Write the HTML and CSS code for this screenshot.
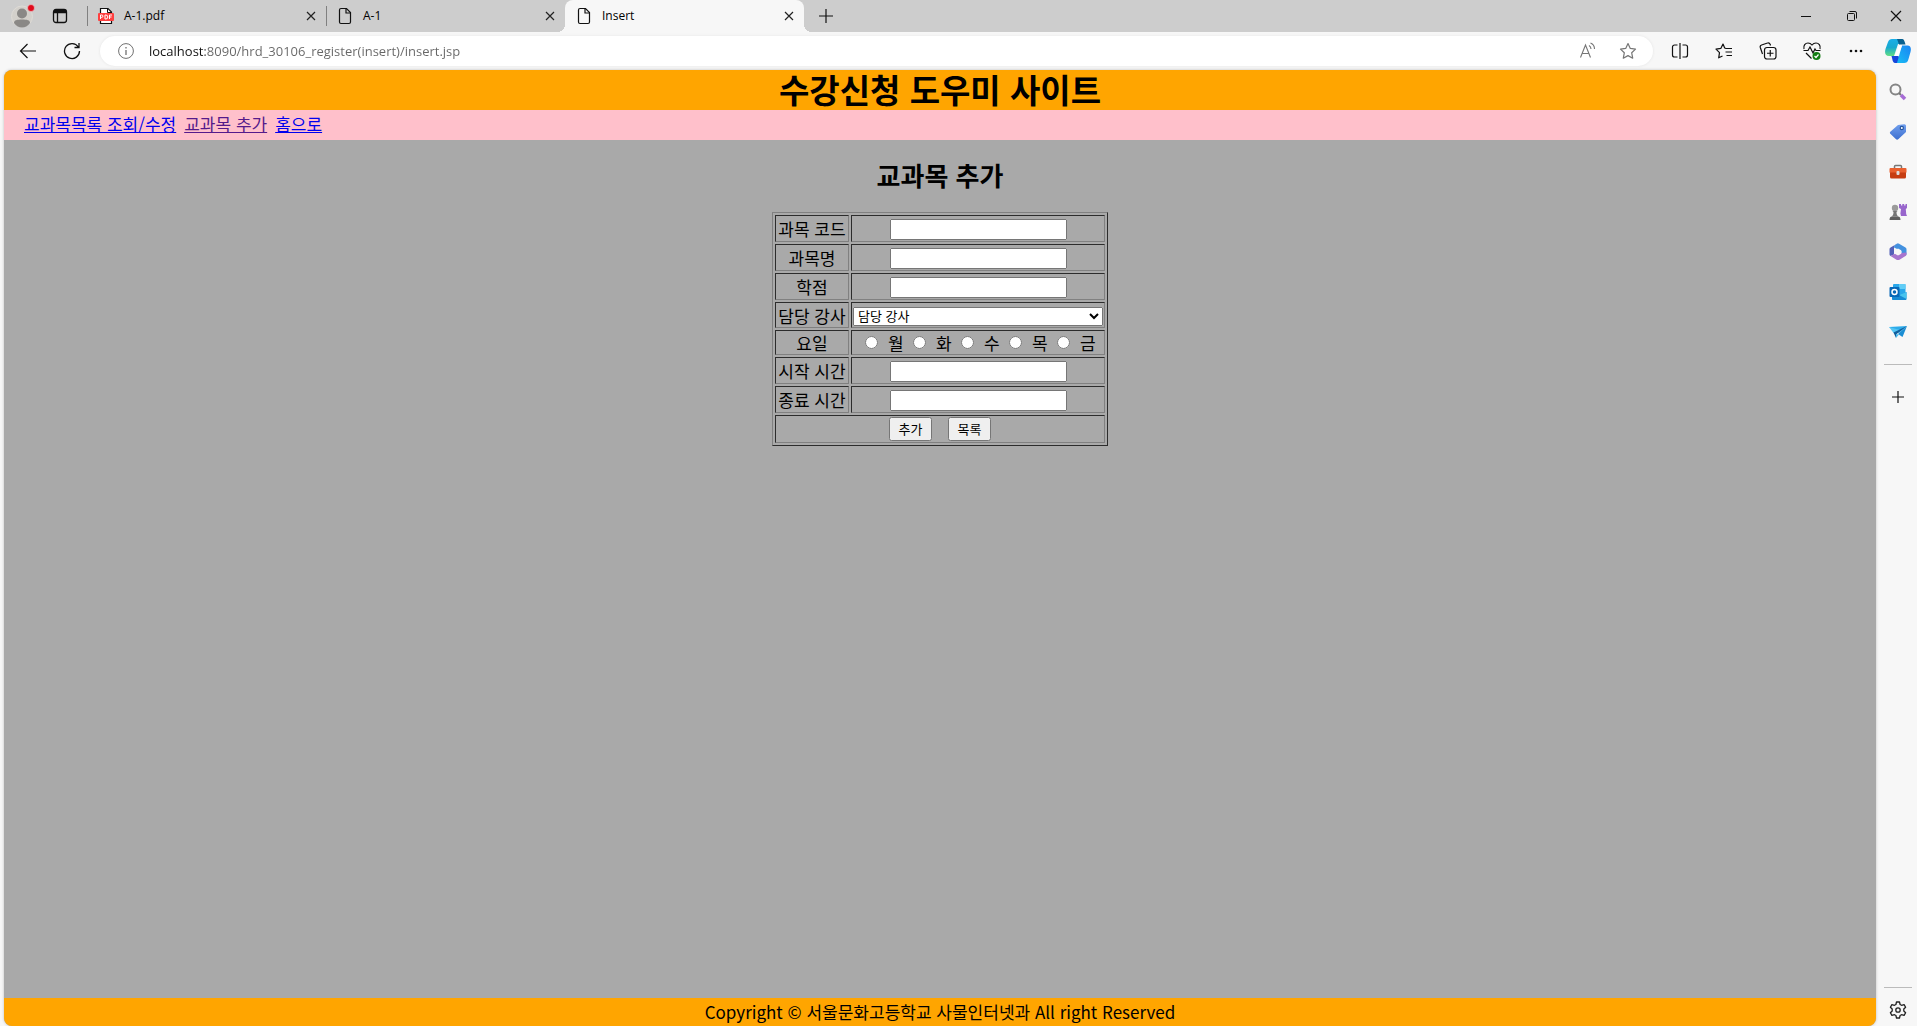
FILE: index.html
```html
<!DOCTYPE html>
<html lang="ko">
<head>
<meta charset="utf-8">
<title>Insert</title>
<meta name="viewport" content="width=device-width, initial-scale=1">
<link rel="stylesheet" href="styles.css">
</head>
<body>
<div class="browser">
  <div class="tab-bar">
    <button class="chrome-button profile" aria-label="Profile">
      <svg width="26" height="26" viewBox="0 0 26 26"><circle cx="12" cy="13.500" r="10.500" fill="#d3d0cb" stroke="#dedbd6"/><circle cx="12" cy="10.500" r="5" fill="#8a8886"/><path d="M4 20c0-3 3-3.500 8-3.500s8 .5 8 3.500c-2 3-5 4.500-8 4.500S6 23 4 20z" fill="#8a8886"/><circle cx="21" cy="5" r="3.500" fill="#e00b1c" stroke="#e9dada" stroke-width=".6"/></svg>
    </button>
    <button class="chrome-button workspace" aria-label="Tab actions">
      <svg width="16" height="16" viewBox="0 0 16 16" fill="none" stroke="#111" stroke-width="1.300"><rect x="1.500" y="1.500" width="13" height="13" rx="2.500"/><path d="M2 3.500h12" stroke-width="3.500"/><path d="M5.500 5v9.500"/></svg>
    </button>
    <div class="tab">
      <svg class="tab-icon" width="16" height="18" viewBox="0 0 16 18"><path d="M2.500 7V1.500h7.500l3.500 3.500v11.500h-11V13" fill="#fff" stroke="#111" stroke-width="1.200"/><path d="M9.500 1.500v4h4" fill="none" stroke="#111"/><rect x="0" y="6" width="16" height="8" rx="1" fill="#ff4040"/><path d="M2.500 12V8h1.200a1.200 1.200 0 0 1 0 2.400H2.500M7 8v4h.8a2 2 0 0 0 0-4zM11.500 12V8H14M11.500 10h2" fill="none" stroke="#fff"/></svg>
      <span class="tab-title">A-1.pdf</span>
      <button class="chrome-button close" aria-label="Close A-1.pdf"><svg width="10" height="10" viewBox="0 0 10 10" stroke="#222" stroke-width="1.200"><path d="M1 1l8 8M9 1L1 9"/></svg></button>
    </div>
    <div class="tab">
      <svg class="tab-icon" width="16" height="18" viewBox="0 0 16 18" fill="none" stroke="#111" stroke-width="1.200"><path d="M4 1.500h5.500l4 4V15a1.500 1.500 0 0 1-1.500 1.500H4A1.500 1.500 0 0 1 2.500 15V3A1.500 1.500 0 0 1 4 1.500z"/><path d="M9 1.500V6h4.500"/></svg>
      <span class="tab-title">A-1</span>
      <button class="chrome-button close" aria-label="Close A-1"><svg width="10" height="10" viewBox="0 0 10 10" stroke="#222" stroke-width="1.200"><path d="M1 1l8 8M9 1L1 9"/></svg></button>
    </div>
    <div class="tab tab-active">
      <svg class="tab-icon" width="16" height="18" viewBox="0 0 16 18" fill="none" stroke="#111" stroke-width="1.200"><path d="M4 1.500h5.500l4 4V15a1.500 1.500 0 0 1-1.500 1.500H4A1.500 1.500 0 0 1 2.500 15V3A1.500 1.500 0 0 1 4 1.500z"/><path d="M9 1.500V6h4.500"/></svg>
      <span class="tab-title">Insert</span>
      <button class="chrome-button close" aria-label="Close Insert"><svg width="10" height="10" viewBox="0 0 10 10" stroke="#222" stroke-width="1.200"><path d="M1 1l8 8M9 1L1 9"/></svg></button>
    </div>
    <button class="chrome-button new-tab" aria-label="New tab"><svg width="14" height="14" viewBox="0 0 14 14" stroke="#111" stroke-width="1.200"><path d="M7 0v14M0 7h14"/></svg></button>
    <div class="window-controls">
      <button class="chrome-button window-button" aria-label="Minimize"><svg width="12" height="12" viewBox="0 0 12 12" stroke="#111"><path d="M1 6.500h10"/></svg></button>
      <button class="chrome-button window-button" aria-label="Restore"><svg width="12" height="12" viewBox="0 0 12 12" fill="none" stroke="#111"><rect x="1.500" y="3.500" width="7" height="7" rx="1"/><path d="M3.500 1.500H9A1.500 1.500 0 0 1 10.500 3v5.500"/></svg></button>
      <button class="chrome-button window-button" aria-label="Close"><svg width="12" height="12" viewBox="0 0 12 12" stroke="#111" stroke-width="1.200"><path d="M1 1l10 10M11 1L1 11"/></svg></button>
    </div>
  </div>

  <div class="toolbar">
    <button class="chrome-button tool" aria-label="Back"><svg width="18" height="18" viewBox="0 0 18 18" fill="none" stroke="#111" stroke-width="1.200"><path d="M17 9H1.500M8.500 2l-7 7 7 7"/></svg></button>
    <button class="chrome-button tool" aria-label="Refresh"><svg width="18" height="18" viewBox="0 0 18 18" fill="none" stroke="#111" stroke-width="1.300"><path d="M15.300 5A7.500 7.500 0 1 0 16.500 9M16 1v4.500h-4.500"/></svg></button>
    <div class="address">
      <svg width="16" height="16" viewBox="0 0 16 16" fill="none" stroke="#707070"><circle cx="8" cy="8" r="7.400"/><path d="M8 7v5M8 4v1.500" stroke-width="1.300"/></svg>
      <input class="url" type="text" aria-label="Address" value="localhost:8090/hrd_30106_register(insert)/insert.jsp">
      <button class="chrome-button address-tool" aria-label="Read aloud"><svg width="18" height="18" viewBox="0 0 18 18" fill="none" stroke="#767676" stroke-width="1.100"><path d="M1.500 15.500L6.500 3l5 12.500M3.300 11.500h6.400M10 3.500c1.300.8 2 2 2 3.500M11.500 1c2.500 1 4 3 4 6"/></svg></button>
      <button class="chrome-button address-tool" aria-label="Favorite"><svg width="18" height="18" viewBox="0 0 18 18" fill="none" stroke="#767676" stroke-width="1.200" stroke-linejoin="round"><path d="M9 1.500l2.300 4.900 5.200.7-3.800 3.700 1 5.400L9 13.600l-4.700 2.600 1-5.400-3.800-3.700 5.200-.7z"/></svg></button>
    </div>
    <button class="chrome-button tool" aria-label="Split screen"><svg width="18" height="18" viewBox="0 0 18 18" fill="none" stroke="#111" stroke-width="1.200"><path d="M9 1v16M6.500 3h-3A2 2 0 0 0 1.500 5v8a2 2 0 0 0 2 2h3M11.500 3h3a2 2 0 0 1 2 2v8a2 2 0 0 1-2 2h-3"/></svg></button>
    <button class="chrome-button tool" aria-label="Favorites"><svg width="18" height="18" viewBox="0 0 18 18" fill="none" stroke="#111" stroke-width="1.200" stroke-linejoin="round"><path d="M11 6.500L9.700 6 8 2 5.800 6.400l-4.800.7 3.500 3.500-.8 5.200L7.500 14M10.500 6.500H17M10.500 10H17M11.500 13.500H17"/></svg></button>
    <button class="chrome-button tool" aria-label="Collections"><svg width="18" height="18" viewBox="0 0 18 18" fill="none" stroke="#111" stroke-width="1.200"><rect x="5.500" y="5.500" width="11.500" height="11.500" rx="2.500"/><path d="M11.250 8v6.500M8 11.250h6.500M3.500 12L1.300 5.500A2 2 0 0 1 2.600 3L8.500 1a2 2 0 0 1 2.600 1.300l.4 1.200"/></svg></button>
    <button class="chrome-button tool" aria-label="Browser essentials"><svg width="20" height="20" viewBox="0 0 20 20" fill="none" stroke="#111" stroke-width="1.200"><path d="M2 8C1 4.500 3.500 2 6 2c2 0 3.200 1 4 2 .8-1 2-2 4-2 2.500 0 5 2.500 4 6M1.500 9.500H6L8 6l3 6 2-4 1 1.500h4.500M4 12l5.500 5.500"/><circle cx="14.500" cy="15" r="4" fill="#107c10" stroke="none"/><path d="M12.500 15l1.500 1.500 2.500-3" stroke="#fff"/></svg></button>
    <button class="chrome-button tool" aria-label="Settings and more"><svg width="16" height="4" viewBox="0 0 16 4" fill="#111"><circle cx="3" cy="2" r="1.300"/><circle cx="8" cy="2" r="1.300"/><circle cx="13" cy="2" r="1.300"/></svg></button>
    <button class="chrome-button copilot" aria-label="Copilot">
      <svg width="26" height="24" viewBox="0 0 26 24">
        <defs>
          <linearGradient id="cp-left" x1="0" y1="0" x2="0" y2="1"><stop offset="0" stop-color="#1aaee8"/><stop offset=".5" stop-color="#18a9cf"/><stop offset="1" stop-color="#62df83"/></linearGradient>
          <linearGradient id="cp-right" x1="0" y1="1" x2="1" y2="0"><stop offset="0" stop-color="#18bdf4"/><stop offset="1" stop-color="#1a83f3"/></linearGradient>
        </defs>
        <path d="M7 0h9c2 0 2.500 2 3.200 5H13L9 17H4c-4 0-4.500-3-3.500-7L3 3C3.800 1 5 0 7 0z" fill="url(#cp-left)"/>
        <path d="M12 0h5c2 0 2.500 2 3.500 5.500h-6.500z" fill="#08608f"/>
        <path d="M6.500 17h7l2 7H10c-2.500 0-2.500-4-3.500-7z" fill="#1746db"/>
        <path d="M17 6.500h5.500c3 0 4 2.500 3 6.500l-2 7c-.8 3-2 4-4.500 4h-7z" fill="url(#cp-right)"/>
        <path d="M14 6.500h3L13 17h-3.500z" fill="#fff"/>
      </svg>
    </button>
  </div>

  <div class="workspace-area">
    <div class="page">
      <header class="site-header"><h1>수강신청 도우미 사이트</h1></header>
      <nav class="site-nav">
        <a href="#list">교과목목록 조회/수정</a>
        <a class="visited" href="#insert">교과목 추가</a>
        <a href="#home">홈으로</a>
      </nav>
      <main class="content">
        <h2>교과목 추가</h2>
        <form>
          <table class="course-table">
            <tr><td class="name"><label for="code">과목 코드</label></td><td class="field"><input class="text" type="text" id="code"></td></tr>
            <tr><td class="name"><label for="subject">과목명</label></td><td class="field"><input class="text" type="text" id="subject"></td></tr>
            <tr><td class="name"><label for="credit">학점</label></td><td class="field"><input class="text" type="text" id="credit"></td></tr>
            <tr class="select-row"><td class="name"><label for="lecturer">담당 강사</label></td><td class="field"><select id="lecturer"><option>담당 강사</option></select></td></tr>
            <tr class="days-row"><td class="name">요일</td><td class="field">
              <div class="days">
                <label><input type="radio" name="week">월</label>
                <label><input type="radio" name="week">화</label>
                <label><input type="radio" name="week">수</label>
                <label><input type="radio" name="week">목</label>
                <label><input type="radio" name="week">금</label>
              </div></td></tr>
            <tr><td class="name"><label for="start">시작 시간</label></td><td class="field"><input class="text" type="text" id="start"></td></tr>
            <tr><td class="name"><label for="end">종료 시간</label></td><td class="field"><input class="text" type="text" id="end"></td></tr>
            <tr><td colspan="2"><div class="actions"><button type="submit">추가</button><button type="button">목록</button></div></td></tr>
          </table>
        </form>
      </main>
      <footer class="site-footer">Copyright © 서울문화고등학교 사물인터넷과 All right Reserved</footer>
    </div>

    <aside class="sidebar">
      <button class="chrome-button side" aria-label="Search"><svg width="18" height="18" viewBox="0 0 18 18" fill="none"><circle cx="6.500" cy="6.500" r="5" stroke="#858585" stroke-width="2"/><path d="M10 10l2 2" stroke="#777" stroke-width="2"/><path d="M12 12l4 4" stroke="#a66cd5" stroke-width="3.500"/></svg></button>
      <button class="chrome-button side" aria-label="Shopping"><svg width="18" height="18" viewBox="0 0 18 18"><defs><linearGradient id="tag" x1="0" y1="0" x2="0" y2="1"><stop offset="0" stop-color="#72a0ee"/><stop offset="1" stop-color="#3c6fcf"/></linearGradient></defs><path d="M9 2l6-.8c1.200-.2 2 .6 2 1.800v6L9.500 16c-1 1-1.800 1-2.700 0L1.600 11c-1-1-1-1.800 0-2.600z" fill="url(#tag)"/><circle cx="12.800" cy="5" r="1.600" fill="#fff" stroke="#24549f" stroke-width="1.200"/></svg></button>
      <button class="chrome-button side" aria-label="Tools"><svg width="18" height="18" viewBox="0 0 18 18"><path d="M5.500 5V3.500c0-.7.400-1 1-1h5c.6 0 1 .3 1 1V5" fill="none" stroke="#777" stroke-width="1.500"/><rect x=".5" y="5" width="17" height="5" rx="1" fill="#e9602f"/><path d="M1 9.500h16V14a1.500 1.500 0 0 1-1.500 1.500h-13A1.500 1.500 0 0 1 1 14z" fill="#c63d12"/><rect x="7.500" y="8" width="3" height="4" rx="1" fill="#ddd"/></svg></button>
      <button class="chrome-button side" aria-label="Games"><svg width="18" height="20" viewBox="0 0 18 20"><circle cx="6" cy="6" r="3.200" fill="#9b9b9b"/><path d="M3.500 9h5l-1 1c0 2 .5 3.500 2 4.500H2.500c1.500-1 2-2.500 2-4.500z" fill="#777"/><path d="M.5 18c0-2.500 1-3.500 2.500-3.500h6c1.500 0 2.500 1 2.500 3.500z" fill="#606060"/><path d="M10 2h2v1.500h1.300V2h1.900v1.500h1.300V2H18v4l-1.200 1 .4 5 .8 2h-6l-.6-2.500.6-4.500-2-1z" fill="#9866cc"/></svg></button>
      <button class="chrome-button side" aria-label="Microsoft 365"><svg width="18" height="18" viewBox="0 0 18 18"><path d="M9 .5L6 2.300C5 3 5 3.500 5 4.500v7L1.500 13C.8 12.500.5 12 .5 11V6.500c0-1 .4-1.500 1-2L7.500.9z" fill="#5360b8"/><path d="M7.500.9C8.500.3 9.500.3 10.500.9l6 3.600c.7.500 1 1 1 2V11c0 .8-.3 1.300-1 1.700L12.500 10V8L5 4.500c0-1 0-1.500 1-2.200z" fill="#4391df"/><path d="M17.500 9.500V11c0 1-.3 1.500-1 2l-6 3.700c-1 .5-2 .5-3 0L1.500 13l5-2.500L9 12l3.500-2z" fill="#a775ce"/><path d="M9 5.500l3.200 1.800v3.500L9 12.600l-3.200-1.800V7.300z" fill="#f7f7f7"/></svg></button>
      <button class="chrome-button side" aria-label="Outlook"><svg width="18" height="18" viewBox="0 0 18 18"><rect x="4" y="1" width="12.500" height="12" rx="1" fill="#2aa7ea"/><path d="M10 1h6.500v5H10z" fill="#61cdf6"/><path d="M3 10l7 2 7.500-3v7c0 .6-.4 1-1 1H4c-.6 0-1-.4-1-1z" fill="#178bd4"/><path d="M17.500 9v7L10 12z" fill="#48c4ee"/><rect x=".5" y="4" width="10" height="10" rx="1" fill="#0868b7"/><circle cx="5.500" cy="9" r="2.500" fill="none" stroke="#fff" stroke-width="1.500"/></svg></button>
      <button class="chrome-button side" aria-label="Drop"><svg width="18" height="18" viewBox="0 0 18 18"><path d="M0 4l18-1-8 7z" fill="#2dabea"/><path d="M0 4l11 3-6 3.500z" fill="#54c5f3"/><path d="M18 3l-4.500 11L9 11z" fill="#1b8ed4"/><path d="M4.500 9.500L18 3 7 11.500V15z" fill="#125e9c"/><path d="M7 15l3-3.500-3-.5z" fill="#45b8ed"/></svg></button>
      <hr>
      <button class="chrome-button side" aria-label="Customize"><svg width="12" height="12" viewBox="0 0 12 12" stroke="#111" stroke-width="1.200"><path d="M6 0v12M0 6h12"/></svg></button>
      <div class="sidebar-bottom">
        <hr>
        <button class="chrome-button side settings" aria-label="Settings"><svg width="18" height="18" viewBox="0 0 18 18" fill="none" stroke="#222" stroke-width="1.300" stroke-linejoin="round"><path d="M7.500 1h3l.6 2.500 1.400.8 2.600-.7 1.500 2.600L14.800 8v2l1.800 1.800-1.500 2.600-2.600-.7-1.400.8-.6 2.500h-3l-.6-2.500-1.400-.8-2.600.7-1.500-2.600L3.200 10V8L1.400 6.200l1.500-2.600 2.600.7 1.400-.8z"/><circle cx="9" cy="9" r="2.200"/></svg></button>
      </div>
    </aside>
  </div>
</div>
</body>
</html>
```
FILE: styles.css
```css
* {
  box-sizing: border-box;
}

body {
  margin: 0;
  background: #f7f7f7;
  color: #000;
  font: 17px/24px "Noto Sans CJK KR", sans-serif;
}

.browser {
  display: flex;
  flex-direction: column;
  min-height: 100vh;
}

.chrome-button {
  display: flex;
  align-items: center;
  justify-content: center;
  flex: none;
  padding: 0;
  border: 0;
  background: none;
}

/* Tab strip */
.tab-bar {
  display: flex;
  align-items: stretch;
  height: 32px;
  background: #cdcdcd;
  font: 12px/16px "Open Sans", sans-serif;
}

.profile {
  width: 46px;
}

.workspace {
  width: 28px;
  margin-right: 13px;
}

.tab {
  position: relative;
  display: flex;
  align-items: center;
  flex: 0 1 239px;
  padding: 0 10px 0 11px;
}

.tab:not(.tab-active)::before {
  content: "";
  position: absolute;
  left: 0;
  top: 6px;
  width: 1px;
  height: 20px;
  background: #808080;
}

.tab-active {
  background: #f7f7f7;
  border-radius: 8px 8px 0 0;
}

.tab-active::before,
.tab-active::after {
  content: "";
  position: absolute;
  bottom: 0;
  width: 8px;
  height: 8px;
}

.tab-active::before {
  right: 100%;
  background: radial-gradient(circle at 0 0, #cdcdcd 8px, #f7f7f7 8px);
}

.tab-active::after {
  left: 100%;
  background: radial-gradient(circle at 100% 0, #cdcdcd 8px, #f7f7f7 8px);
}

.tab-title {
  flex: 1;
  padding-left: 10px;
}

.close {
  width: 10px;
}

.new-tab {
  width: 44px;
}

.window-controls {
  display: flex;
  margin-left: auto;
}

.window-button {
  width: 46px;
}

.window-button:last-child {
  width: 42px;
}

/* Toolbar */
.toolbar {
  display: flex;
  align-items: center;
  height: 38px;
  padding-left: 6px;
}

.tool {
  width: 44px;
  height: 32px;
}

.copilot {
  width: 39px;
  height: 32px;
}

.address {
  display: flex;
  align-items: center;
  flex: 1;
  height: 30px;
  margin: 0 5px 0 6px;
  padding: 0 5px 0 18px;
  border-radius: 15px;
  background: #fff;
  box-shadow: 0 0 3px #e4e4e4;
}

.url {
  flex: 1;
  min-width: 0;
  padding: 0 0 0 15px;
  border: 0;
  outline: 0;
  color: #707070;
  font: 13px/20px "Open Sans", sans-serif;
  background: linear-gradient(90deg, #111 71px, #666 71px);
  -webkit-background-clip: text;
  background-clip: text;
  -webkit-text-fill-color: transparent;
}

.address-tool {
  width: 40px;
}

/* Page and sidebar */
.workspace-area {
  display: flex;
  flex: 1;
  padding-left: 4px;
}

.page {
  display: flex;
  flex: 1;
  flex-direction: column;
  border-radius: 8px;
  background: #a9a9a9;
  box-shadow: 0 0 3px #bbb;
}

.site-header {
  border-radius: 8px 8px 0 0;
  background: #ffa500;
  text-align: center;
}

h1 {
  margin: 0;
  font-size: 33px;
  line-height: 38px;
  padding-bottom: 2px;
}

.site-nav {
  display: flex;
  gap: 8px;
  padding: 2px 20px 4px;
  background: #ffc0cb;
}

.site-nav a {
  color: #00e;
}

.site-nav .visited {
  color: #551a8b;
}

.content {
  flex: 1;
}

h2 {
  margin: 19px 0 21px;
  font-size: 26px;
  line-height: 32px;
  text-align: center;
}

.course-table {
  margin: 0 auto;
  border: 1px solid;
  border-color: #808080 #2c2c2c #2c2c2c #808080;
  border-spacing: 2px;
  line-height: 21px;
  text-align: center;
}

.course-table td {
  height: 27px;
  padding: 1px;
  border: 1px solid;
  border-color: #2c2c2c #808080 #808080 #2c2c2c;
}

.course-table .select-row td {
  height: 26px;
}

.course-table .select-row .field {
  vertical-align: bottom;
}

.course-table .days-row td {
  height: 25px;
}

.course-table .name {
  width: 74px;
}

.course-table .field {
  width: 254px;
}

.course-table input,
.course-table select,
.course-table button {
  font: 13px/17px "Liberation Sans", "Noto Sans CJK KR", sans-serif;
}

.text {
  display: block;
  width: 177px;
  height: 21px;
  margin: 2px auto 0;
}

select {
  display: block;
  width: 250px;
  height: 19px;
  padding: 0;
}

.days {
  display: grid;
  grid-template-columns: repeat(5, 48px);
  width: 250px;
  padding-left: 12px;
}

.days label {
  display: flex;
  align-items: center;
  gap: 10px;
}

.days input {
  width: 13px;
  height: 13px;
  margin: 0;
}

.actions {
  display: flex;
  justify-content: center;
  gap: 16px;
}

.actions button {
  width: 43px;
  height: 24px;
  padding: 0;
}

.site-footer {
  padding: 2px 0;
  border-radius: 0 0 8px 8px;
  background: #ffa500;
  text-align: center;
}

.sidebar {
  display: flex;
  flex: none;
  flex-direction: column;
  align-items: center;
  width: 41px;
  padding: 2px 0 0 3px;
}

.side {
  width: 38px;
  height: 40px;
}

.sidebar hr {
  width: 28px;
  height: 1px;
  margin: 12px 0;
  border: 0;
  background: #bbb;
}

.sidebar-bottom {
  display: flex;
  flex-direction: column;
  align-items: center;
  margin-top: auto;
}

.sidebar-bottom hr {
  margin: 0 0 6px;
}

.settings {
  height: 32px;
}
```
